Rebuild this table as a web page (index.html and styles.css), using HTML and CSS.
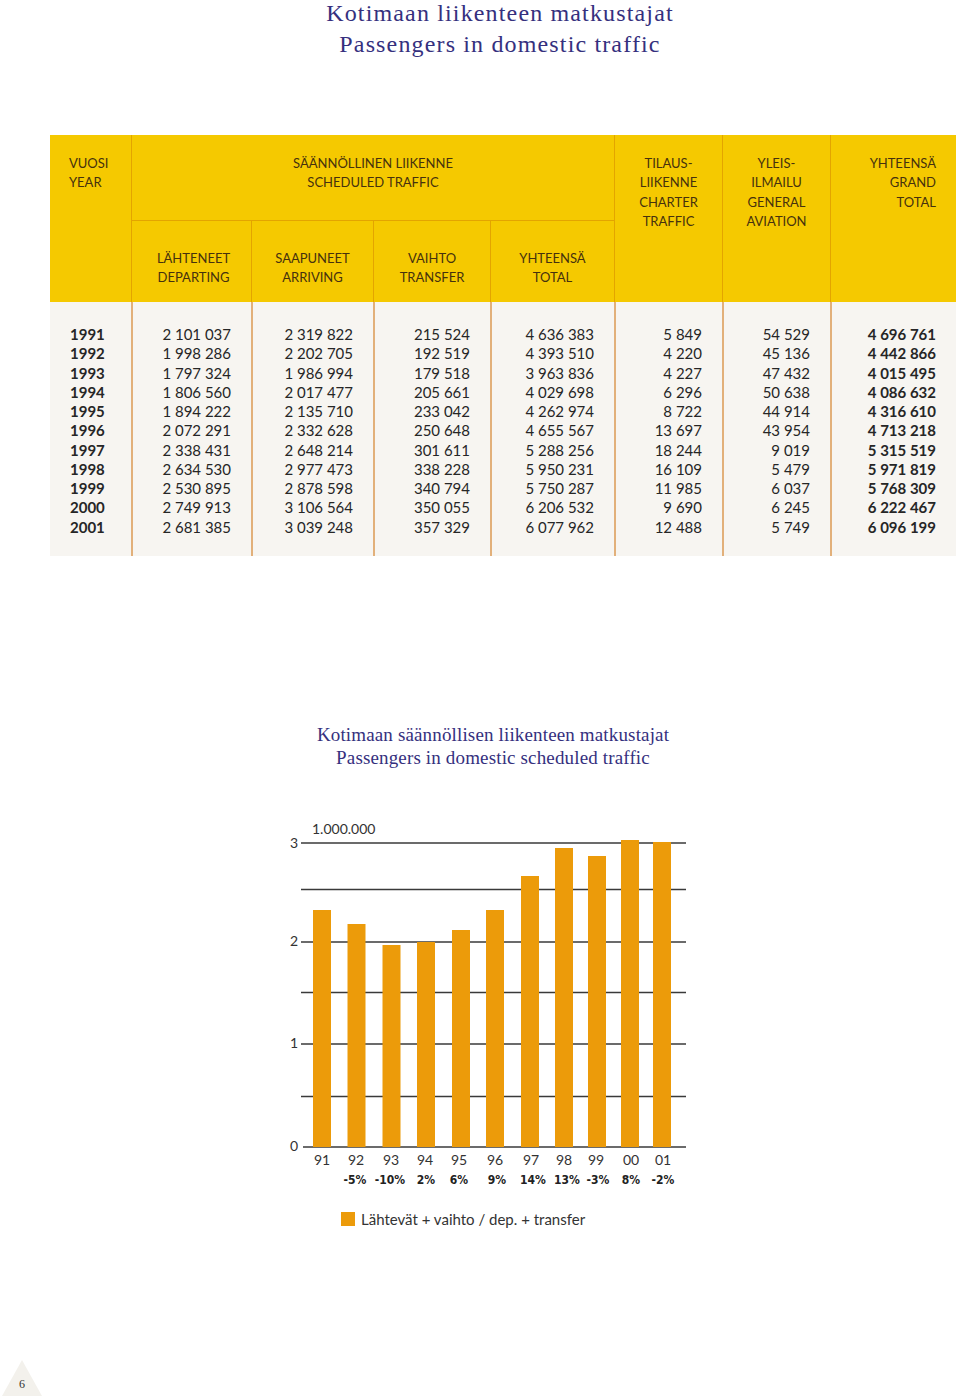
FILE: index.html
```html
<!DOCTYPE html>
<html lang="fi">
<head>
<meta charset="utf-8">
<title>Kotimaan liikenteen matkustajat</title>
<link rel="stylesheet" href="styles.css">
</head>
<body>
<div class="page">
  <h1 class="title">
    <span class="title-line">Kotimaan liikenteen matkustajat</span>
    <span class="title-line">Passengers in domestic traffic</span>
  </h1>

  <section class="table">
    <div class="thead">
      <div class="th th-year">VUOSI<br>YEAR</div>
      <div class="th th-sched">SÄÄNNÖLLINEN LIIKENNE<br>SCHEDULED TRAFFIC</div>
      <div class="th th-charter">TILAUS-<br>LIIKENNE<br>CHARTER<br>TRAFFIC</div>
      <div class="th th-ga">YLEIS-<br>ILMAILU<br>GENERAL<br>AVIATION</div>
      <div class="th th-grand">YHTEENSÄ<br>GRAND<br>TOTAL</div>
      <div class="th th-sub th-dep">LÄHTENEET<br>DEPARTING</div>
      <div class="th th-sub">SAAPUNEET<br>ARRIVING</div>
      <div class="th th-sub">VAIHTO<br>TRANSFER</div>
      <div class="th th-sub">YHTEENSÄ<br>TOTAL</div>
    </div>
    <div class="tbody">
      <div class="col col-year">
        <div>1991</div><div>1992</div><div>1993</div><div>1994</div><div>1995</div><div>1996</div><div>1997</div><div>1998</div><div>1999</div><div>2000</div><div>2001</div>
      </div>
      <div class="col">
        <div>2 101 037</div><div>1 998 286</div><div>1 797 324</div><div>1 806 560</div><div>1 894 222</div><div>2 072 291</div><div>2 338 431</div><div>2 634 530</div><div>2 530 895</div><div>2 749 913</div><div>2 681 385</div>
      </div>
      <div class="col">
        <div>2 319 822</div><div>2 202 705</div><div>1 986 994</div><div>2 017 477</div><div>2 135 710</div><div>2 332 628</div><div>2 648 214</div><div>2 977 473</div><div>2 878 598</div><div>3 106 564</div><div>3 039 248</div>
      </div>
      <div class="col">
        <div>215 524</div><div>192 519</div><div>179 518</div><div>205 661</div><div>233 042</div><div>250 648</div><div>301 611</div><div>338 228</div><div>340 794</div><div>350 055</div><div>357 329</div>
      </div>
      <div class="col">
        <div>4 636 383</div><div>4 393 510</div><div>3 963 836</div><div>4 029 698</div><div>4 262 974</div><div>4 655 567</div><div>5 288 256</div><div>5 950 231</div><div>5 750 287</div><div>6 206 532</div><div>6 077 962</div>
      </div>
      <div class="col">
        <div>5 849</div><div>4 220</div><div>4 227</div><div>6 296</div><div>8 722</div><div>13 697</div><div>18 244</div><div>16 109</div><div>11 985</div><div>9 690</div><div>12 488</div>
      </div>
      <div class="col">
        <div>54 529</div><div>45 136</div><div>47 432</div><div>50 638</div><div>44 914</div><div>43 954</div><div>9 019</div><div>5 479</div><div>6 037</div><div>6 245</div><div>5 749</div>
      </div>
      <div class="col col-grand">
        <div>4 696 761</div><div>4 442 866</div><div>4 015 495</div><div>4 086 632</div><div>4 316 610</div><div>4 713 218</div><div>5 315 519</div><div>5 971 819</div><div>5 768 309</div><div>6 222 467</div><div>6 096 199</div>
      </div>
    </div>
  </section>

  <h2 class="chart-title">
    <span class="title-line">Kotimaan säännöllisen liikenteen matkustajat</span>
    <span class="title-line">Passengers in domestic scheduled traffic</span>
  </h2>

  <svg class="chart" width="420" height="390" viewBox="280 815 420 390" xmlns="http://www.w3.org/2000/svg">
    <g class="grid">
      <line x1="301" y1="843" x2="686" y2="843"/>
      <line x1="301" y1="889.5" x2="686" y2="889.5"/>
      <line x1="301" y1="942" x2="686" y2="942"/>
      <line x1="301" y1="992.5" x2="686" y2="992.5"/>
      <line x1="301" y1="1044" x2="686" y2="1044"/>
      <line x1="301" y1="1096.5" x2="686" y2="1096.5"/>
      <line class="zero" x1="303" y1="1147" x2="686" y2="1147"/>
    </g>
    <g class="bars">
      <rect x="313" y="910" width="18" height="237"/>
      <rect x="347.5" y="924" width="18" height="223"/>
      <rect x="382.5" y="945" width="18" height="202"/>
      <rect x="417" y="942" width="18" height="205"/>
      <rect x="452" y="930" width="18" height="217"/>
      <rect x="486" y="910" width="18" height="237"/>
      <rect x="521" y="876" width="18" height="271"/>
      <rect x="555" y="848" width="18" height="299"/>
      <rect x="588" y="856" width="18" height="291"/>
      <rect x="621" y="840" width="18" height="307"/>
      <rect x="653" y="842" width="18" height="305"/>
    </g>
    <g class="axis-y">
      <text x="298" y="848">3</text>
      <text x="298" y="946">2</text>
      <text x="298" y="1048">1</text>
      <text x="298" y="1151">0</text>
    </g>
    <text class="unit" x="312" y="834">1.000.000</text>
    <g class="axis-x">
      <text x="322" y="1165">91</text>
      <text x="356" y="1165">92</text>
      <text x="391" y="1165">93</text>
      <text x="425" y="1165">94</text>
      <text x="459" y="1165">95</text>
      <text x="495" y="1165">96</text>
      <text x="531" y="1165">97</text>
      <text x="564" y="1165">98</text>
      <text x="596" y="1165">99</text>
      <text x="631" y="1165">00</text>
      <text x="663" y="1165">01</text>
    </g>
    <g class="pct">
      <text x="355" y="1184">-5%</text>
      <text x="390" y="1184">-10%</text>
      <text x="426" y="1184">2%</text>
      <text x="459" y="1184">6%</text>
      <text x="497" y="1184">9%</text>
      <text x="533" y="1184">14%</text>
      <text x="567" y="1184">13%</text>
      <text x="598" y="1184">-3%</text>
      <text x="631" y="1184">8%</text>
      <text x="663" y="1184">-2%</text>
    </g>
  </svg>

  <div class="legend">
    <span class="swatch"></span>
    <span class="legend-text">Lähtevät + vaihto / dep. + transfer</span>
  </div>

  <footer class="folio"><span class="folio-num">6</span></footer>
</div>
</body>
</html>
```

FILE: styles.css
```css
html, body {
  margin: 0;
  padding: 0;
  background: #ffffff;
}

.page {
  width: 960px;
  min-height: 1396px;
  display: flex;
  flex-direction: column;
  font-family: "Lato", "Open Sans", sans-serif;
  color: #2a2a2a;
}

.title {
  margin: -2px 0 0 0;
  font-family: "Liberation Serif", serif;
  font-weight: normal;
  font-size: 24px;
  line-height: 31px;
  letter-spacing: 1.15px;
  color: #35307e;
  text-align: center;
  transform: translateX(20px);
}

.title-line {
  display: block;
}

.table {
  margin: 75px 0 0 50px;
  width: 906px;
}

.thead {
  display: grid;
  grid-template-columns: 81px 120px 122px 117px 124px 108px 108px 126px;
  grid-template-rows: 86px 81px;
  background: #f5c900;
  font-size: 13px;
  line-height: 19.3px;
  color: #46310e;
}

.th {
  box-sizing: border-box;
  padding-top: 19px;
  border-left: 1px solid #e3a400;
  text-align: center;
}

.th-year {
  grid-column: 1;
  grid-row: 1 / 3;
  border-left: none;
  text-align: left;
  padding-left: 19px;
}

.th-sched {
  grid-column: 2 / 6;
  grid-row: 1;
  border-bottom: 1px solid #e3a400;
}

.th-charter {
  grid-column: 6;
  grid-row: 1 / 3;
}

.th-ga {
  grid-column: 7;
  grid-row: 1 / 3;
}

.th-grand {
  grid-column: 8;
  grid-row: 1 / 3;
  text-align: right;
  padding-right: 20px;
}

.th-sub {
  grid-row: 2;
  padding-top: 28px;
}

.th-dep {
  grid-column: 2;
  padding-left: 4px;
}

.tbody {
  display: grid;
  grid-template-columns: 81px 120px 122px 117px 124px 108px 108px 126px;
  background: #f7f5f1;
  font-size: 15px;
  line-height: 19.25px;
  color: #262626;
}

.col {
  box-sizing: border-box;
  padding: 23px 20px 19px 0;
  border-left: 2px solid #e2b07a;
  text-align: right;
  white-space: nowrap;
}

.col-year {
  border-left: none;
  text-align: left;
  padding-left: 20px;
  font-weight: bold;
}

.col-grand {
  font-weight: bold;
}

.chart-title {
  margin: 167px 0 0 0;
  font-family: "Liberation Serif", serif;
  font-weight: normal;
  font-size: 19px;
  line-height: 23px;
  letter-spacing: 0.15px;
  color: #35307e;
  text-align: center;
  transform: translateX(13px);
}

.chart {
  display: block;
  margin: 46px 0 0 280px;
}

.grid line {
  stroke: #3a3a3a;
  stroke-width: 1.4;
}

.bars rect {
  fill: #ec9b0a;
}

.axis-y text {
  font-family: "Lato", sans-serif;
  font-size: 14px;
  fill: #333333;
  text-anchor: end;
}

.unit {
  font-family: "Lato", sans-serif;
  font-size: 14px;
  fill: #333333;
}

.axis-x text {
  font-family: "Lato", sans-serif;
  font-size: 14px;
  fill: #333333;
  text-anchor: middle;
}

.pct text {
  font-family: "DejaVu Sans Condensed", "Liberation Sans Narrow", sans-serif;
  font-stretch: condensed;
  font-weight: bold;
  font-size: 12px;
  fill: #222222;
  text-anchor: middle;
}

.legend {
  display: flex;
  align-items: center;
  gap: 6px;
  margin: 5px 0 0 341px;
  font-size: 15px;
  line-height: 18px;
  color: #333333;
}

.swatch {
  width: 14px;
  height: 14px;
  background: #ec9b0a;
}

.folio {
  margin-top: auto;
  margin-left: 2px;
  width: 40px;
  height: 36px;
  background: #f3f1ec;
  clip-path: polygon(50% 0, 100% 100%, 0 100%);
  display: flex;
  justify-content: center;
  align-items: flex-end;
}

.folio-num {
  font-family: "Liberation Serif", serif;
  font-size: 12px;
  line-height: 12px;
  padding-bottom: 6px;
  color: #333333;
}
```
